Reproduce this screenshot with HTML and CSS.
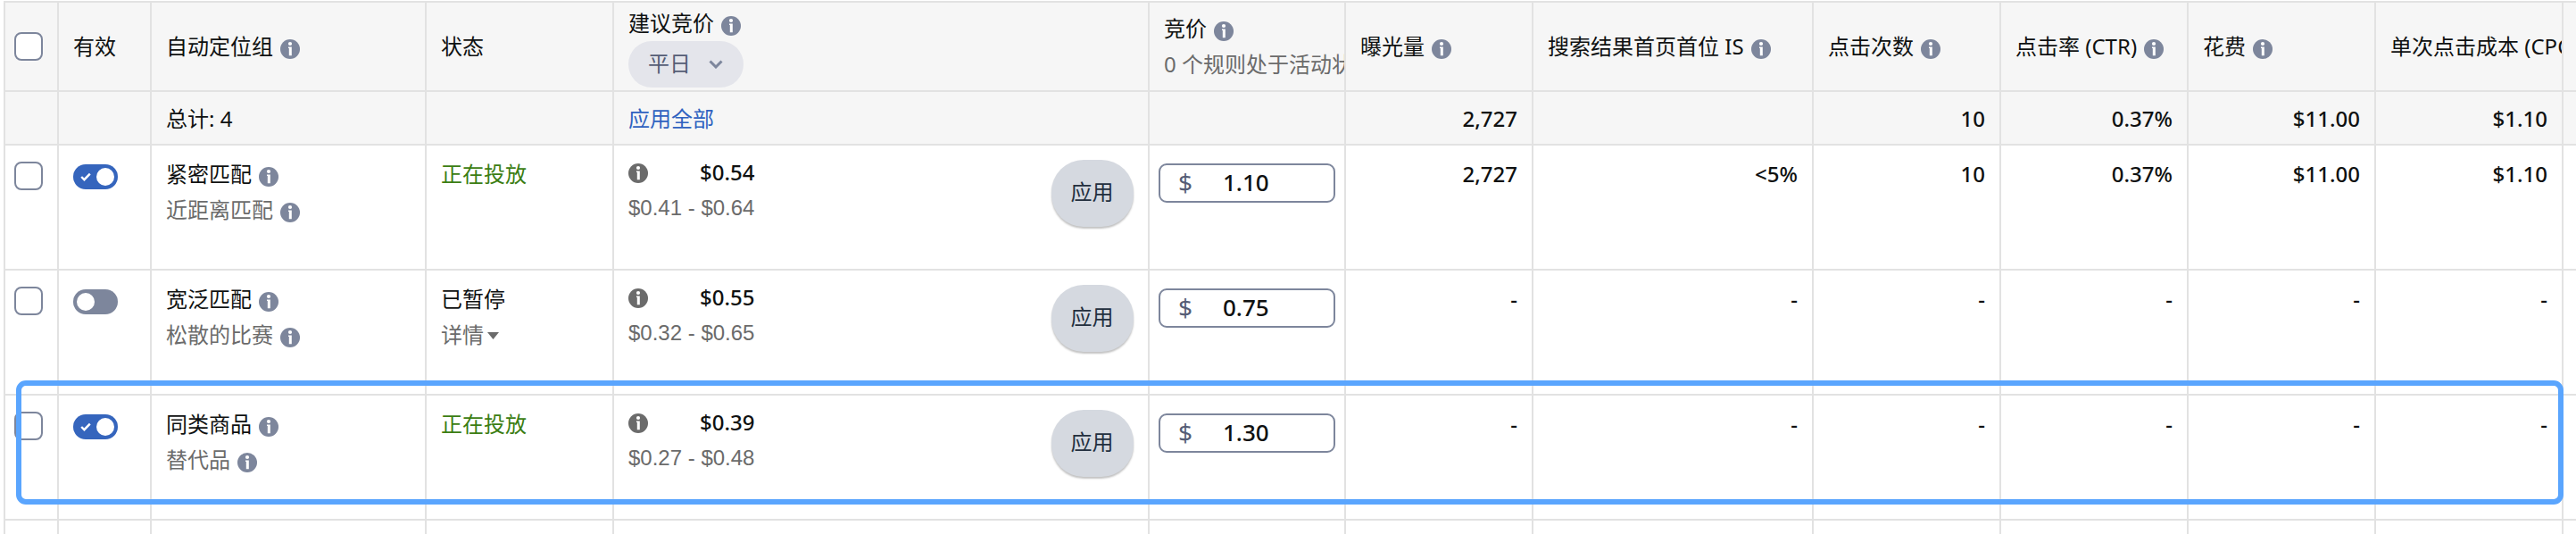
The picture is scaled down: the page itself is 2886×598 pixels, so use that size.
FILE: index.html
```html
<!DOCTYPE html>
<html lang="zh-CN">
<head>
<meta charset="utf-8">
<title>自动定位组</title>
<link rel="stylesheet" href="styles.css">
</head>
<body>
<svg class="defs" aria-hidden="true">
  <symbol id="info" viewBox="0 0 22 22">
    <circle cx="11" cy="11" r="11" fill="currentColor"/>
    <circle cx="11" cy="5" r="2.100" fill="#fff"/>
    <path d="M9 8.400h3.800v9.800h-3v-8.200H9z" fill="#fff"/>
  </symbol>
  <symbol id="check" viewBox="0 0 12 10">
    <path d="M1.2 5l3.2 3.2L10.8 1.6" fill="none" stroke="#fff" stroke-width="2.4"/>
  </symbol>
</svg>
<div class="table">
  <div class="row head">
    <div class="cell select"><span class="checkbox"></span></div>
    <div class="cell">有效</div>
    <div class="cell"><div class="label">自动定位组<svg class="info"><use href="#info"/></svg></div></div>
    <div class="cell">状态</div>
    <div class="cell suggested">
      <div class="label">建议竞价<svg class="info"><use href="#info"/></svg></div>
      <button class="dropdown">平日<svg class="chevron" viewBox="0 0 16 10"><path d="M1.5 1.5L8 8l6.500-6.500" fill="none" stroke="currentColor" stroke-width="3"/></svg></button>
    </div>
    <div class="cell bid">
      <div class="label">竞价<svg class="info"><use href="#info"/></svg></div>
      <div class="muted">0 个规则处于活动状态</div>
    </div>
    <div class="cell"><div class="label">曝光量<svg class="info"><use href="#info"/></svg></div></div>
    <div class="cell"><div class="label">搜索结果首页首位 IS<svg class="info"><use href="#info"/></svg></div></div>
    <div class="cell"><div class="label">点击次数<svg class="info"><use href="#info"/></svg></div></div>
    <div class="cell"><div class="label">点击率 (CTR)<svg class="info"><use href="#info"/></svg></div></div>
    <div class="cell"><div class="label">花费<svg class="info"><use href="#info"/></svg></div></div>
    <div class="cell"><div class="label">单次点击成本 (CPC)</div></div>
    <div class="cell"></div>
  </div>

  <div class="row total">
    <div class="cell"></div>
    <div class="cell"></div>
    <div class="cell">总计: 4</div>
    <div class="cell"></div>
    <div class="cell"><a class="link">应用全部</a></div>
    <div class="cell"></div>
    <div class="cell num">2,727</div>
    <div class="cell num"></div>
    <div class="cell num">10</div>
    <div class="cell num">0.37%</div>
    <div class="cell num">$11.00</div>
    <div class="cell num">$1.10</div>
    <div class="cell"></div>
  </div>

  <div class="row">
    <div class="cell select"><span class="checkbox"></span></div>
    <div class="cell switch"><span class="toggle on"><svg class="check"><use href="#check"/></svg><i class="knob"></i></span></div>
    <div class="cell">
      <div class="label">紧密匹配<svg class="info"><use href="#info"/></svg></div>
      <div class="label muted">近距离匹配<svg class="info"><use href="#info"/></svg></div>
    </div>
    <div class="cell live">正在投放</div>
    <div class="cell offer">
      <div class="range">
        <div class="price"><svg class="info"><use href="#info"/></svg>$0.54</div>
        <div class="span">$0.41 - $0.64</div>
      </div>
      <button class="apply">应用</button>
    </div>
    <div class="cell entry"><div class="input"><span class="currency">$</span>1.10</div></div>
    <div class="cell num">2,727</div>
    <div class="cell num">&lt;5%</div>
    <div class="cell num">10</div>
    <div class="cell num">0.37%</div>
    <div class="cell num">$11.00</div>
    <div class="cell num">$1.10</div>
    <div class="cell"></div>
  </div>

  <div class="row">
    <div class="cell select"><span class="checkbox"></span></div>
    <div class="cell switch"><span class="toggle"><i class="knob"></i></span></div>
    <div class="cell">
      <div class="label">宽泛匹配<svg class="info"><use href="#info"/></svg></div>
      <div class="label muted">松散的比赛<svg class="info"><use href="#info"/></svg></div>
    </div>
    <div class="cell">
      <div>已暂停</div>
      <div class="details muted">详情<svg class="caret" viewBox="0 0 13 8"><path d="M0 0h13L6.500 8z" fill="currentColor"/></svg></div>
    </div>
    <div class="cell offer">
      <div class="range">
        <div class="price"><svg class="info"><use href="#info"/></svg>$0.55</div>
        <div class="span">$0.32 - $0.65</div>
      </div>
      <button class="apply">应用</button>
    </div>
    <div class="cell entry"><div class="input"><span class="currency">$</span>0.75</div></div>
    <div class="cell num">-</div>
    <div class="cell num">-</div>
    <div class="cell num">-</div>
    <div class="cell num">-</div>
    <div class="cell num">-</div>
    <div class="cell num">-</div>
    <div class="cell"></div>
  </div>

  <div class="row">
    <div class="cell select"><span class="checkbox"></span></div>
    <div class="cell switch"><span class="toggle on"><svg class="check"><use href="#check"/></svg><i class="knob"></i></span></div>
    <div class="cell">
      <div class="label">同类商品<svg class="info"><use href="#info"/></svg></div>
      <div class="label muted">替代品<svg class="info"><use href="#info"/></svg></div>
    </div>
    <div class="cell live">正在投放</div>
    <div class="cell offer">
      <div class="range">
        <div class="price"><svg class="info"><use href="#info"/></svg>$0.39</div>
        <div class="span">$0.27 - $0.48</div>
      </div>
      <button class="apply">应用</button>
    </div>
    <div class="cell entry"><div class="input"><span class="currency">$</span>1.30</div></div>
    <div class="cell num">-</div>
    <div class="cell num">-</div>
    <div class="cell num">-</div>
    <div class="cell num">-</div>
    <div class="cell num">-</div>
    <div class="cell num">-</div>
    <div class="cell"></div>
  </div>

  <div class="row">
    <div class="cell"></div><div class="cell"></div><div class="cell"></div><div class="cell"></div>
    <div class="cell"></div><div class="cell"></div><div class="cell"></div><div class="cell"></div>
    <div class="cell"></div><div class="cell"></div><div class="cell"></div><div class="cell"></div>
    <div class="cell"></div>
  </div>
  <div class="highlight"></div>
</div>
</body>
</html>
```

FILE: styles.css
```css
* { box-sizing: border-box; }

body {
  margin: 0;
  height: 598px;
  overflow: hidden;
  background: #fff;
  color: #0f1111;
  font: 24px/40px "Noto Sans", "Noto Sans CJK SC", sans-serif;
}

.defs { position: absolute; width: 0; height: 0; }

.table {
  position: relative;
  height: 598px;
  padding: 1px 0 0 4px;
  overflow: hidden;
}

.row {
  display: grid;
  grid-template-columns: 60px 104px 308px 210px 600px 220px 210px 314px 210px 210px 210px 210px 16px;
  height: 140px;
  border-top: 2px solid #e2e2e2;
}

.cell {
  min-width: 0;
  padding: 12px 0 0 16px;
  border-left: 2px solid #e2e2e2;
  overflow: hidden;
  white-space: nowrap;
}

.cell:last-child { padding: 0; }

.head { height: 100px; background: #f6f6f6; }
.head .cell {
  display: flex;
  align-items: center;
  padding-top: 0;
}

.total { height: 60px; background: #f6f6f6; }
.total .cell { padding-top: 10px; }

.row .select { padding: 18px 0 0 10px; }
.head .select { padding-top: 0; }
.row .switch { padding-top: 21px; }

.checkbox {
  display: block;
  width: 32px;
  height: 32px;
  border: 2px solid #7d869c;
  border-radius: 8px;
  background: #fff;
}

.label { display: flex; align-items: center; }
.info {
  flex: none;
  width: 22px;
  height: 22px;
  margin: 6px 0 0 8px;
  color: #7d869c;
}

.muted { color: #6b6b6b; }
.link { color: #2f62c0; }
.live { color: #3b7d12; }
.num { padding-right: 16px; text-align: right; }
.num, .price, .input { font-weight: 500; }

.head .suggested {
  flex-direction: column;
  align-items: flex-start;
  padding-top: 3px;
}
.dropdown {
  display: flex;
  align-items: center;
  width: 129px;
  height: 52px;
  padding: 0 23px 2px 22px;
  border: 0;
  border-radius: 26px;
  background: #e4e5eb;
  color: #555d75;
  font: inherit;
  justify-content: space-between;
}
.chevron { width: 16px; height: 10px; color: #7d869c; margin-top: 2px; }

.head .bid {
  flex-direction: column;
  align-items: flex-start;
  padding-top: 9px;
}

.toggle {
  display: flex;
  align-items: center;
  width: 50px;
  height: 28px;
  padding: 4px;
  border-radius: 14px;
  background: #7d869c;
}
.toggle.on { justify-content: space-between; background: #3565bd; }
.knob { width: 20px; height: 20px; border-radius: 50%; background: #fff; }
.check { width: 12px; height: 10px; margin-left: 4px; }

.offer {
  display: flex;
  justify-content: space-between;
  padding-top: 10px;
}
.price { display: flex; align-items: center; justify-content: space-between; }
.price .info { margin: 2px 0 0; color: #6b6b6b; }
.span { color: #6b6b6b; font-family: "Liberation Sans", Arial, sans-serif; }
.apply {
  width: 92px;
  height: 75px;
  margin: 6px 16px 0 0;
  padding: 0 1px 3px 0;
  border: 0;
  border-radius: 36px;
  background: #d5d9e0;
  box-shadow: 0 2px 2px rgba(15, 17, 17, .25);
  color: #232f3e;
  font: inherit;
}

.row .entry { padding: 20px 0 0 10px; }
.input {
  display: flex;
  align-items: center;
  width: 198px;
  height: 44px;
  padding: 0 0 2px 20px;
  border: 2px solid #7d869c;
  border-radius: 9px;
  font-size: 26px;
}
.currency { width: 50px; color: #555d75; font-size: 28px; font-weight: 400; }

.details { display: flex; align-items: center; }
.caret { width: 13px; height: 8px; margin: 2px 0 0 4px; }

.highlight {
  position: absolute;
  left: 18px;
  top: 426px;
  width: 2854px;
  height: 139px;
  border: 6px solid #5aa5fe;
  border-radius: 11px;
}
```
